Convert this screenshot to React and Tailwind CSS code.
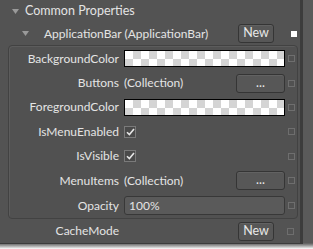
import React from "react";

const font = { fontFamily: 'Lato, "Open Sans", sans-serif' };

function Tri() {
  return (
    <svg width="7" height="5" viewBox="0 0 7 5" className="shrink-0">
      <path d="M0 0 L7 0 L3.5 5 Z" fill="#9a9a9a" />
    </svg>
  );
}

function Btn({ children, w }) {
  return (
    <div
      className={`${w} h-[19px] shrink-0 rounded-[3px] border border-[#353535] bg-[#575757] flex items-center justify-center text-[12.5px] text-[#e8e8e8] leading-none shadow-[inset_0_1px_0_#626262]`}
    >
      {children}
    </div>
  );
}

function Marker({ filled }) {
  return filled ? (
    <div className="w-[6px] h-[6px] bg-white shrink-0" />
  ) : (
    <div className="w-[7px] h-[7px] border border-[#6e6e6e] shrink-0" />
  );
}

function Swatch() {
  return (
    <div className="w-[161px] h-[17px] border border-black bg-white bg-[conic-gradient(#d4d4d4_25%,#ffffff_0_50%,#d4d4d4_0_75%,#ffffff_0)] bg-size-[16px_16px]" />
  );
}

function Check() {
  return (
    <div className="w-[12px] h-[12px] border border-[#7a7a7a] bg-[#4a4a4a] flex items-center justify-center">
      <svg width="9" height="8" viewBox="0 0 9 8">
        <path d="M1 4.2 L3.4 6.6 L8 1" stroke="#e6e6e6" strokeWidth="1.6" fill="none" />
      </svg>
    </div>
  );
}

function Row({ h, label, children, marker = true }) {
  return (
    <div className={`${h} flex items-center`}>
      <div className="w-[110px] shrink-0 text-right pr-[5px] text-[12px] text-[#e4e4e4] whitespace-nowrap">{label}</div>
      <div className="w-[162px] shrink-0 flex items-center">{children}</div>
      <div className="w-[10px] shrink-0 flex items-center justify-center">{marker && <Marker />}</div>
    </div>
  );
}

export default function App() {
  return (
    <div className="w-[313px] h-[249px] bg-[linear-gradient(to_bottom,#5a5a5a_0,#5a5a5a_243px,#8a8a8a_245px,#ffffff_249px)] overflow-hidden" style={font}>
      <div className="w-[303px] h-[244px] bg-[#535353] border-r-[3px] border-b-[1px] border-[#3c3c3c]">
        {/* header */}
        <div className="h-[22px] flex items-center pl-[12px] gap-[6px]">
          <Tri />
          <span className="text-[12.5px] text-[#e4e4e4]">Common Properties</span>
        </div>
        {/* ApplicationBar */}
        <div className="h-[23px] flex items-center">
          <div className="pl-[22px] w-[238px] shrink-0 flex items-center">
            <Tri />
            <span className="ml-[15px] text-[12px] text-[#e4e4e4] whitespace-nowrap">ApplicationBar (ApplicationBar)</span>
          </div>
          <Btn w="w-[36px]">New</Btn>
          <div className="ml-[17px]">
            <Marker filled />
          </div>
        </div>
        {/* panel */}
        <div className="ml-[8px] w-[290px] h-[174px] border border-[#424242] rounded-[4px] bg-[#515151] shadow-[inset_1px_1px_0_#5c5c5c] pl-[5px]">
          <Row h="h-[25px]" label="BackgroundColor"><Swatch /></Row>
          <Row h="h-[24px]" label="Buttons">
            <span className="text-[12px] text-[#e4e4e4] whitespace-nowrap">(Collection)</span>
            <div className="ml-auto mr-[1px]"><Btn w="w-[49px]">...</Btn></div>
          </Row>
          <Row h="h-[24px]" label="ForegroundColor"><Swatch /></Row>
          <Row h="h-[25px]" label="IsMenuEnabled"><Check /></Row>
          <Row h="h-[24px]" label="IsVisible"><Check /></Row>
          <Row h="h-[25px]" label="MenuItems">
            <span className="text-[12px] text-[#e4e4e4] whitespace-nowrap">(Collection)</span>
            <div className="ml-auto mr-[1px]"><Btn w="w-[49px]">...</Btn></div>
          </Row>
          <Row h="h-[25px]" label="Opacity">
            <div className="w-[161px] h-[19px] rounded-[3px] border border-[#383838] bg-[#5a5a5a] text-[12px] text-[#e4e4e4] flex items-center pl-[4px]">100%</div>
          </Row>
        </div>
        {/* CacheMode */}
        <div className="h-[24px] flex items-center pl-[14px]">
          <div className="w-[110px] shrink-0 text-right pr-[5px] text-[12px] text-[#e4e4e4]">CacheMode</div>
          <div className="ml-[114px]"><Btn w="w-[36px]">New</Btn></div>
          <div className="ml-[13px]"><Marker /></div>
        </div>
      </div>
    </div>
  );
}
